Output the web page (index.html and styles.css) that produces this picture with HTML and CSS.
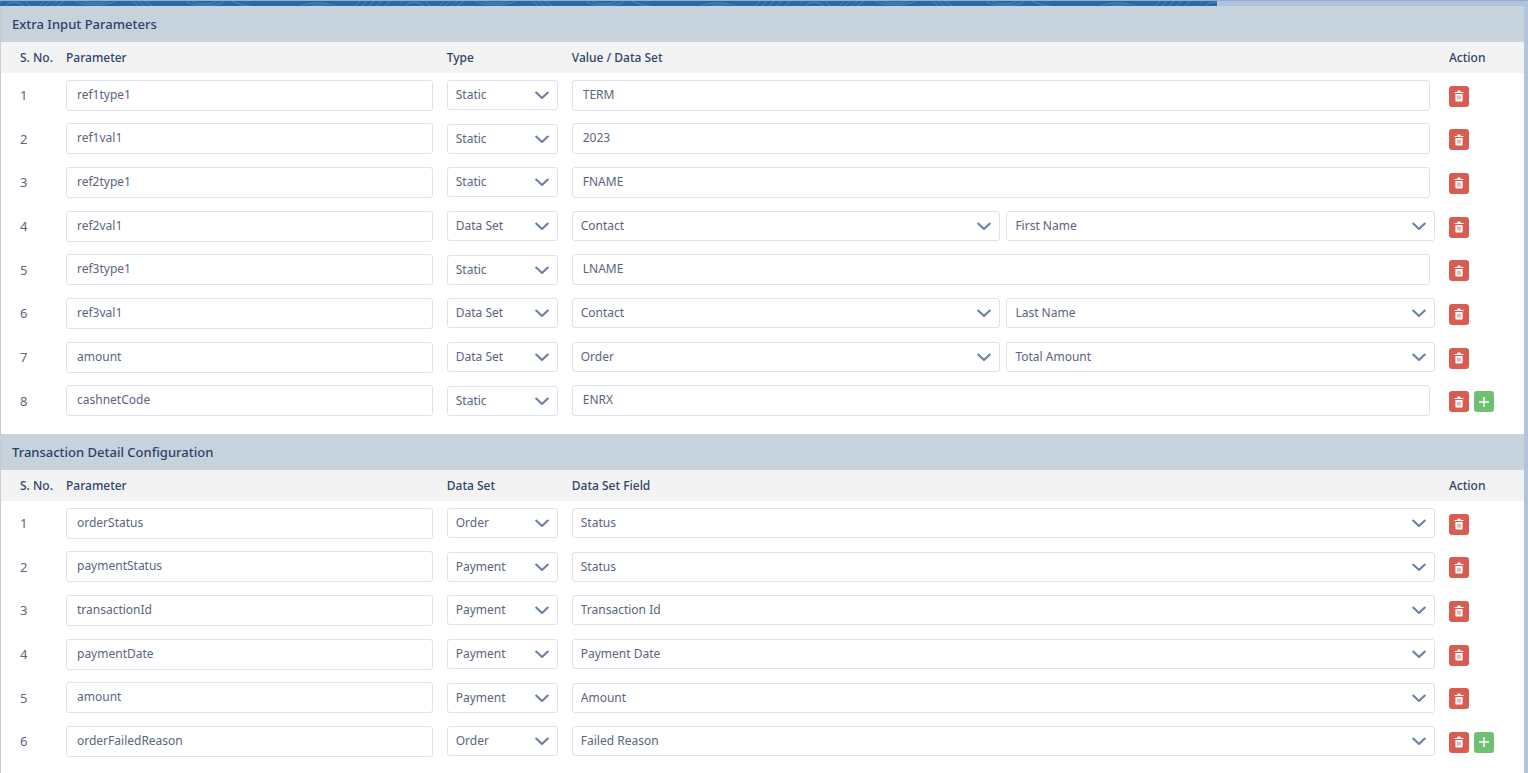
FILE: index.html
```
<!DOCTYPE html>
<html lang="en">
<head>
  <meta charset="UTF-8" />
  <meta name="viewport" content="width=device-width, initial-scale=1.0"/>
  <title>Payment Configuration</title>
  <link rel="stylesheet" href="styles.css">
</head>
<body>
  <svg class="sprite" xmlns="http://www.w3.org/2000/svg">
    <symbol id="icon-chevron" viewBox="0 0 14 9">
      <path d="M1.2 1.6 L7 7 L12.8 1.6" fill="none" stroke="currentColor" stroke-width="2.1" stroke-linecap="round" stroke-linejoin="round"/>
    </symbol>
    <symbol id="icon-trash" viewBox="0 0 10 12">
      <path d="M3.3 2V1.4C3.3 .9 3.6.6 4.1.6h1.8c.5 0 .8.3.8.8V2h2.4c.3 0 .5.2.5.5v.6H.4v-.6c0-.3.2-.5.5-.5z" fill="currentColor"/>
      <path d="M1.4 4h7.2v6.4c0 .6-.4 1-1 1H2.4c-.6 0-1-.4-1-1z" fill="currentColor"/>
      <path d="M3 5.6h4v4H3z" fill="#d95c52" opacity=".45"/>
    </symbol>
    <symbol id="icon-plus" viewBox="0 0 10 10">
      <path d="M5 .5v9M.5 5h9" fill="none" stroke="currentColor" stroke-width="1.4" stroke-linecap="round"/>
    </symbol>
  </svg>

  <div class="topbar">
    <svg class="topbar-pattern" xmlns="http://www.w3.org/2000/svg" aria-hidden="true">
      <defs>
        <pattern id="waves" width="400" height="6" patternUnits="userSpaceOnUse">
          <g fill="none" stroke="#4c85bb" stroke-width="1">
            <circle cx="14" cy="14" r="13"/>
            <circle cx="14" cy="14" r="18"/>
            <path d="M38 6l6-6M44 6l6-6M50 6l7-6M56 6l8-6"/>
            <ellipse cx="95" cy="-3" rx="22" ry="7"/>
            <ellipse cx="95" cy="-3" rx="15" ry="5"/>
            <path d="M132 0l8 6M138 0l8 6M145 0l8 6"/>
            <ellipse cx="205" cy="-2" rx="20" ry="7"/>
            <ellipse cx="205" cy="-2" rx="13" ry="5"/>
            <path d="M232 0q12 6 30 6"/>
            <ellipse cx="318" cy="10" rx="22" ry="8"/>
            <ellipse cx="318" cy="10" rx="14" ry="6"/>
            <path d="M354 6l6-6M361 6l6-6M368 6l6-6M375 6l7-6M383 6l8-6"/>
          </g>
        </pattern>
      </defs>
      <rect width="100%" height="6" fill="url(#waves)"/>
    </svg>
  </div>

  <main class="panel">
    <section class="config">
      <h2>Extra Input Parameters</h2>
      <table>
        <thead>
          <tr>
            <th class="col-no">S. No.</th>
            <th class="col-param">Parameter</th>
            <th class="col-type">Type</th>
            <th>Value / Data Set</th>
            <th class="col-action">Action</th>
          </tr>
        </thead>
        <tbody id="inputRows"></tbody>
      </table>
    </section>

    <section class="config">
      <h2>Transaction Detail Configuration</h2>
      <table>
        <thead>
          <tr>
            <th class="col-no">S. No.</th>
            <th class="col-param">Parameter</th>
            <th class="col-type">Data Set</th>
            <th>Data Set Field</th>
            <th class="col-action">Action</th>
          </tr>
        </thead>
        <tbody id="detailRows"></tbody>
      </table>
    </section>
  </main>

  <script>
    const inputParams = [
      { name: 'ref1type1', type: 'Static', value: 'TERM' },
      { name: 'ref1val1', type: 'Static', value: '2023' },
      { name: 'ref2type1', type: 'Static', value: 'FNAME' },
      { name: 'ref2val1', type: 'Data Set', fields: ['Contact', 'First Name'] },
      { name: 'ref3type1', type: 'Static', value: 'LNAME' },
      { name: 'ref3val1', type: 'Data Set', fields: ['Contact', 'Last Name'] },
      { name: 'amount', type: 'Data Set', fields: ['Order', 'Total Amount'] },
      { name: 'cashnetCode', type: 'Static', value: 'ENRX' }
    ];

    const detailParams = [
      { name: 'orderStatus', type: 'Order', fields: ['Status'] },
      { name: 'paymentStatus', type: 'Payment', fields: ['Status'] },
      { name: 'transactionId', type: 'Payment', fields: ['Transaction Id'] },
      { name: 'paymentDate', type: 'Payment', fields: ['Payment Date'] },
      { name: 'amount', type: 'Payment', fields: ['Amount'] },
      { name: 'orderFailedReason', type: 'Order', fields: ['Failed Reason'] }
    ];

    function textBox(value, label) {
      return `<input type="text" value="${value}" aria-label="${label}">`;
    }

    function dropDown(value, label) {
      return `<div class="select">
        <select aria-label="${label}"><option>${value}</option></select>
        <svg class="chevron"><use href="#icon-chevron"/></svg>
      </div>`;
    }

    function iconButton(kind, icon, label) {
      return `<button type="button" class="btn ${kind}" aria-label="${label}">
        <svg><use href="#${icon}"/></svg>
      </button>`;
    }

    function renderRows(id, rows) {
      document.getElementById(id).innerHTML = rows.map((row, i) => {
        const last = i === rows.length - 1;
        const value = row.fields
          ? row.fields.map(f => dropDown(f, 'Data set field')).join('')
          : textBox(row.value, 'Value');

        return `<tr>
          <td class="col-no">${i + 1}</td>
          <td>${textBox(row.name, 'Parameter')}</td>
          <td>${dropDown(row.type, 'Type')}</td>
          <td><div class="values">${value}</div></td>
          <td><div class="actions">
            ${iconButton('delete', 'icon-trash', 'Delete row')}
            ${last ? iconButton('add', 'icon-plus', 'Add row') : ''}
          </div></td>
        </tr>`;
      }).join('');
    }

    renderRows('inputRows', inputParams);
    renderRows('detailRows', detailParams);
  </script>
</body>
</html>
```
FILE: styles.css
```
* {
  margin: 0;
  padding: 0;
  box-sizing: border-box;
}

body {
  min-height: 100vh;
  display: flex;
  flex-direction: column;
  background-color: #b0c4e0;
  color: #5a6580;
  font-family: "Noto Sans", "Open Sans", sans-serif;
  font-size: 12px;
  line-height: 18px;
}

.sprite {
  display: none;
}

.topbar {
  height: 6px;
  border-top: 1px solid rgba(0, 0, 0, 0.12);
}

.topbar-pattern {
  display: block;
  width: calc(100% - 311px);
  height: 5px;
  background-color: #2a69a6;
}

.panel {
  flex: 1;
  margin-right: 4px;
  border-left: 1px solid #c9cbcf;
  border-radius: 3px 3px 0 0;
  background-color: #fff;
  overflow: hidden;
}

.config {
  padding-bottom: 12px;
}

.config h2 {
  padding: 9px 11px;
  background-color: #c6d2dc;
  color: #2b4269;
  font-size: 13px;
  font-weight: 500;
}

table {
  width: 100%;
  table-layout: fixed;
  border-collapse: collapse;
}

th {
  height: 31px;
  background-color: #f3f3f3;
  color: #2f4468;
  font-weight: 500;
  text-align: left;
}

th.col-no,
td.col-no {
  width: 65px;
  padding-left: 19px;
}

.col-param {
  width: 25%;
}

.col-type {
  width: 125px;
}

.col-action {
  width: 75px;
}

td {
  height: 44px;
  padding-right: 14px;
}

td.col-no {
  padding-right: 0;
  font-size: 13px;
}

tbody tr:nth-child(3n+2) td {
  height: 43px;
}

td:last-child {
  padding-right: 0;
}

input,
select {
  display: block;
  width: 100%;
  border: 1px solid #dfe2ec;
  border-radius: 3px;
  background-color: #fff;
  color: inherit;
  font: inherit;
  outline: none;
}

input {
  height: 31px;
  padding: 0 10px 2px;
}

select {
  height: 30px;
  padding: 0 32px 0 8px;
  appearance: none;
  cursor: pointer;
}

.select {
  position: relative;
  flex: 1;
}

.chevron {
  position: absolute;
  top: 11px;
  right: 9px;
  width: 14px;
  height: 9px;
  color: #6b7ea6;
  pointer-events: none;
}

.values {
  display: flex;
  gap: 6px;
}

.values input {
  margin-right: 5px;
}

.actions {
  display: flex;
  gap: 5px;
  padding-top: 2px;
}

.btn {
  display: flex;
  align-items: center;
  justify-content: center;
  width: 20px;
  height: 21px;
  border: none;
  border-radius: 3px;
  color: #fff;
  cursor: pointer;
}

.btn svg {
  width: 10px;
  height: 12px;
}

.delete {
  background-color: #d95c52;
}

.add {
  background-color: #70c073;
}
```
